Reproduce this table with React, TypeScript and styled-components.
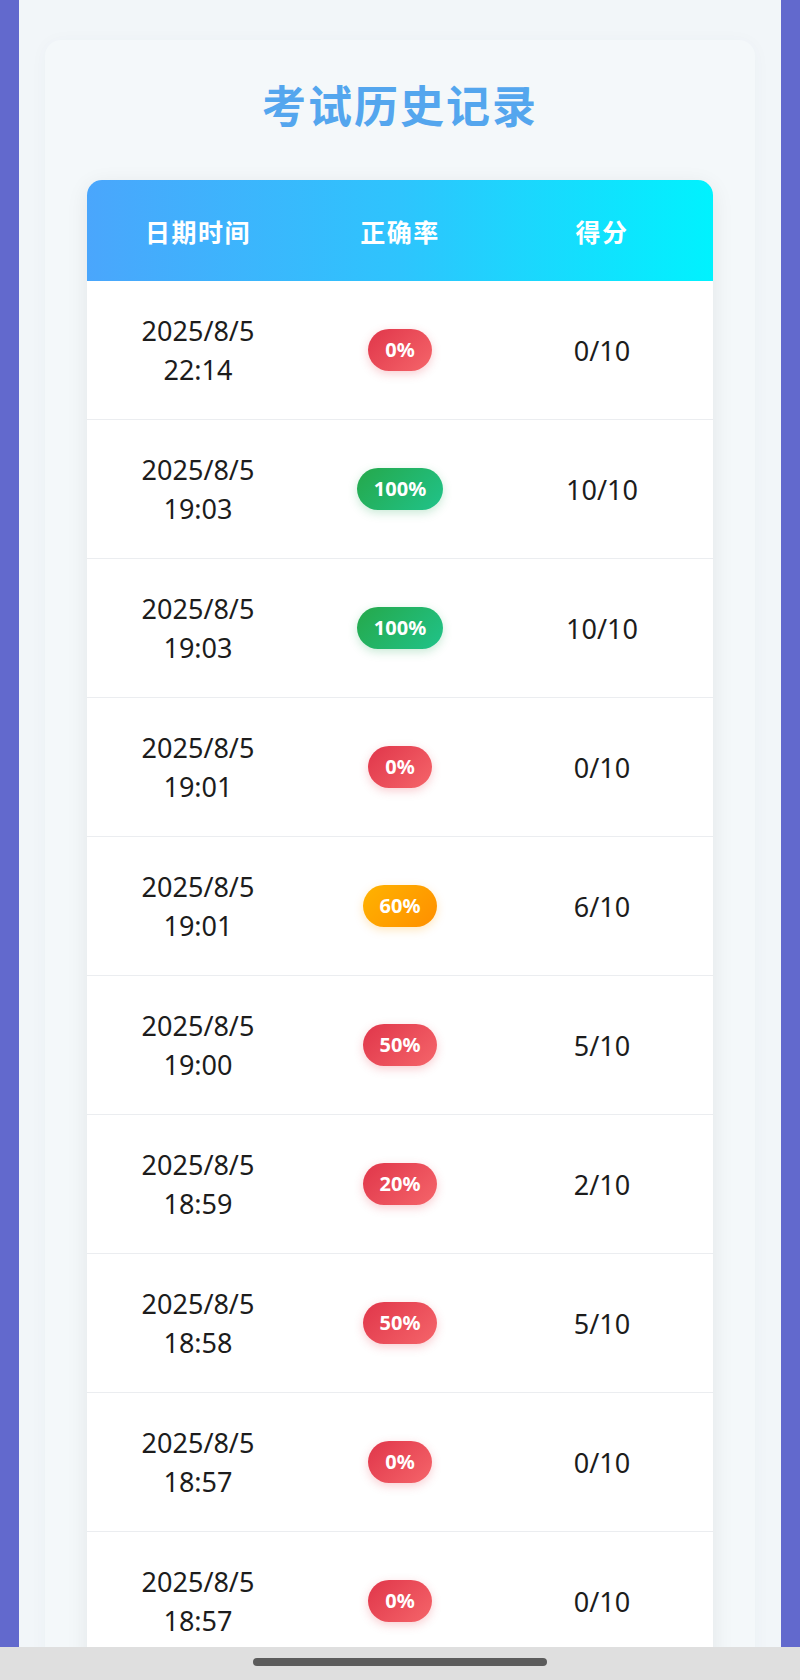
import React from "react";
import styled, { createGlobalStyle } from "styled-components";

const GlobalStyle = createGlobalStyle`
  html, body {
    margin: 0;
    padding: 0;
    background: #6269cd;
  }
  * { box-sizing: border-box; }
`;

const Page = styled.div`
  padding: 0 19px;
  min-height: 1680px;
  font-family: "Noto Sans", "Noto Sans CJK SC", sans-serif;
`;

const Container = styled.div`
  background: #f2f6f9;
  padding: 40px 26px 60px;
  min-height: 1680px;
`;

const HistoryCard = styled.section`
  background: #f4f8fa;
  border-radius: 16px;
  padding: 38px 42px 40px;
  box-shadow: 0 2px 18px rgba(60, 80, 120, 0.035);
`;

const Title = styled.h1`
  margin: 0 0 49px;
  text-align: center;
  font-family: "Noto Sans CJK SC", sans-serif;
  font-weight: 700;
  font-size: 44px;
  line-height: 53px;
  letter-spacing: 2px;
  color: #54a6ee;
`;

const Table = styled.div`
  background: #ffffff;
  border-radius: 15px;
  overflow: hidden;
  box-shadow: 0 5px 22px rgba(0, 0, 0, 0.08);
`;

const HeaderRow = styled.div`
  display: grid;
  grid-template-columns: repeat(3, 1fr);
  align-items: center;
  height: 101px;
  padding: 0 10px;
  background: linear-gradient(90deg, #4aa6fc 0%, #2ec4fd 50%, #00f2fe 100%);
`;

const HeaderCell = styled.div`
  text-align: center;
  color: #ffffff;
  font-family: "Noto Sans CJK SC", sans-serif;
  font-weight: 700;
  font-size: 25px;
  letter-spacing: 1.5px;
`;

const Row = styled.div`
  display: grid;
  grid-template-columns: repeat(3, 1fr);
  align-items: center;
  height: 139px;
  padding: 0 10px;
  border-bottom: 1px solid #ebedf0;
`;

const Cell = styled.div`
  display: flex;
  flex-direction: column;
  align-items: center;
  justify-content: center;
  text-align: center;
  color: #1c1c1c;
  font-family: "Noto Sans", sans-serif;
  font-size: 27px;
  line-height: 39px;
`;

type Level = "bad" | "good" | "mid";

const badgeBg: Record<Level, string> = {
  bad: "linear-gradient(135deg, #e0364a 0%, #f5656a 100%)",
  good: "linear-gradient(135deg, #25a84a 0%, #20c38a 100%)",
  mid: "linear-gradient(135deg, #ffb300 0%, #ff8f00 100%)",
};

const badgeShadow: Record<Level, string> = {
  bad: "0 3px 10px rgba(230, 60, 75, 0.25)",
  good: "0 3px 10px rgba(40, 170, 90, 0.25)",
  mid: "0 3px 10px rgba(255, 160, 0, 0.25)",
};

const Badge = styled.span<{ $level: Level }>`
  display: inline-block;
  padding: 10px 17px;
  border-radius: 22px;
  background: ${(p) => badgeBg[p.$level]};
  box-shadow: ${(p) => badgeShadow[p.$level]};
  color: #ffffff;
  font-family: "Noto Sans", sans-serif;
  font-weight: 700;
  font-size: 20px;
  line-height: 22px;
`;

const NavBar = styled.div`
  position: fixed;
  left: 0;
  right: 0;
  bottom: 0;
  height: 33px;
  background: #dfdfdf;
  display: flex;
  justify-content: center;
  padding-top: 11px;
`;

const NavPill = styled.div`
  width: 294px;
  height: 8px;
  border-radius: 4px;
  background: #5c5c5c;
`;

const records = [
  { date: "2025/8/5", time: "22:14", pct: 0, score: 0 },
  { date: "2025/8/5", time: "19:03", pct: 100, score: 10 },
  { date: "2025/8/5", time: "19:03", pct: 100, score: 10 },
  { date: "2025/8/5", time: "19:01", pct: 0, score: 0 },
  { date: "2025/8/5", time: "19:01", pct: 60, score: 6 },
  { date: "2025/8/5", time: "19:00", pct: 50, score: 5 },
  { date: "2025/8/5", time: "18:59", pct: 20, score: 2 },
  { date: "2025/8/5", time: "18:58", pct: 50, score: 5 },
  { date: "2025/8/5", time: "18:57", pct: 0, score: 0 },
  { date: "2025/8/5", time: "18:57", pct: 0, score: 0 },
];

const levelOf = (pct: number): Level =>
  pct >= 80 ? "good" : pct >= 60 ? "mid" : "bad";

export default function App() {
  return (
    <>
      <GlobalStyle />
      <Page>
        <Container>
          <HistoryCard>
            <Title>考试历史记录</Title>
            <Table>
              <HeaderRow>
                <HeaderCell>日期时间</HeaderCell>
                <HeaderCell>正确率</HeaderCell>
                <HeaderCell>得分</HeaderCell>
              </HeaderRow>
              {records.map((r, i) => (
                <Row key={i}>
                  <Cell>
                    <span>{r.date}</span>
                    <span>{r.time}</span>
                  </Cell>
                  <Cell>
                    <Badge $level={levelOf(r.pct)}>{r.pct}%</Badge>
                  </Cell>
                  <Cell>{r.score}/10</Cell>
                </Row>
              ))}
            </Table>
          </HistoryCard>
        </Container>
      </Page>
      <NavBar>
        <NavPill />
      </NavBar>
    </>
  );
}
